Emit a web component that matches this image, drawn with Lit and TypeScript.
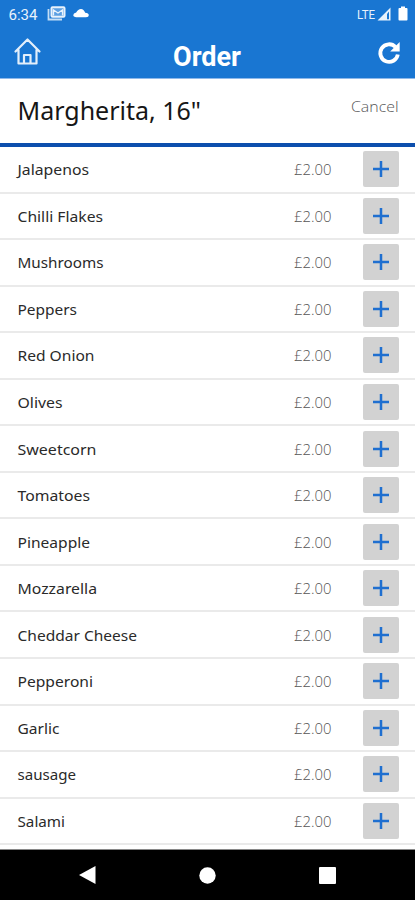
import { LitElement, html, css } from "lit";
import { customElement, property } from "lit/decorators.js";

const toppings: [string, number][] = [
  ["Jalapenos", 71.5], ["Chilli Flakes", 85.5], ["Mushrooms", 86], ["Peppers", 59.5],
  ["Red Onion", 77], ["Olives", 45], ["Sweetcorn", 79], ["Tomatoes", 72.5],
  ["Pineapple", 72.5], ["Mozzarella", 79.5], ["Cheddar Cheese", 119.5],
  ["Pepperoni", 75.5], ["Garlic", 42], ["sausage", 58.5], ["Salami", 47.5],
];

@customElement("topping-row")
class ToppingRow extends LitElement {
  @property() name = "";
  @property({ type: Number }) span = 0;

  static styles = css`
    :host {
      display: flex; align-items: center; box-sizing: border-box;
      height: 46.55px; padding: 0 16px 0 17px; border-bottom: 2px solid #eaeaea;
      font-family: "Noto Sans", sans-serif; font-size: 14.5px;
    }
    .name { flex: 1 1 0; min-width: 0; height: 24px; display: block; overflow: visible; fill: #2a2a2a; }
    .price { flex: none; width: 38px; height: 24px; margin-right: 31px; overflow: visible; fill: #555;
      font-family: "Open Sans", "Noto Sans", sans-serif; font-weight: 300; font-size: 15px; }
    .add {
      flex: none; width: 36px; height: 36px; padding: 0; border: 0; border-radius: 2px;
      background: #d2d2d2; display: grid; place-items: center;
    }
    .add svg { display: block; }
  `;

  render() {
    return html`
      <svg class="name"><text x="0.5" y="17.5" textLength=${this.span} lengthAdjust="spacingAndGlyphs">${this.name}</text></svg>
      <svg class="price"><text x="0" y="17.5" textLength="37.5" lengthAdjust="spacingAndGlyphs">£2.00</text></svg>
      <button class="add" aria-label="Add">
        <svg width="16" height="16"><path d="M8 0V16M0 8H16" stroke="#1f6fd0" stroke-width="2.5" /></svg>
      </button>`;
  }
}

@customElement("app-root")
class AppRoot extends LitElement {
  static styles = css`
    :host { display: flex; flex-direction: column; width: 415px; height: 900px;
      overflow: hidden; background: #fff; font-family: "Noto Sans", sans-serif; }
    svg { display: block; overflow: visible; flex: none; }
    .top { height: 79px; box-sizing: border-box; background: #1976d2; color: #fff;
      border-bottom: 1px solid #8fb9ea; font-family: Roboto, sans-serif; flex: none; }
    .status { height: 27px; display: flex; align-items: center; padding: 0 7px 0 8px; fill: #e8f2fc; }
    .cloud { margin: 0 0 2px 7px; fill: #fff; }
    .mail { margin-left: 9px; }
    .grow { flex: 1; }
    .battery { margin: 0 0 0 7px; fill: #fff; }
    .bar { height: 51px; display: grid; grid-template-columns: 60px 1fr 60px; align-items: center; }
    .home { margin: -8px 0 0 14px; }
    .reload { margin: -6px 14px 0 auto; }
    .title { margin: 0; text-align: center; font-size: 27px; line-height: 51px; font-weight: 700; padding-top: 6px; fill: #fff; }
    .title svg { margin: 0 auto; }
    .pizza { height: 68px; box-sizing: border-box; flex: none; border-bottom: 4px solid #0d4fad;
      display: flex; justify-content: space-between; padding: 0 16px 0 17px; }
    .size { fill: #161616; font-size: 25px; }
    .cancel { fill: #555; font-size: 15px; font-weight: 300; font-family: "Open Sans", "Noto Sans", sans-serif; }
    .list { height: 702px; flex: none; overflow: hidden; }
    .edge { height: 1px; background: #888; flex: none; }
    .nav { flex: 1; background: #000; display: flex; justify-content: space-between;
      padding: 0 79px 0 79px; align-items: center; fill: #fff; }
  `;

  render() {
    return html`
      <header class="top">
        <div class="status">
          <svg width="30" height="18"><text x="0.5" y="15" font-size="15.5" textLength="29" lengthAdjust="spacingAndGlyphs">6:34</text></svg>
          <svg class="mail" width="19" height="15" viewBox="0 0 19 15">
            <path d="M1.500 3V13.500H15" fill="none" stroke="#c4def6" stroke-width="1.800" />
            <rect x="4.500" y="1.300" width="13" height="9.400" rx="1" fill="#5b9fe2" stroke="#e8f2fc" stroke-width="2" />
            <path d="M6.500 9.500V4L11 7L15.500 4V9.500" fill="none" stroke="#e8f2fc" stroke-width="1.300" />
          </svg>
          <svg class="cloud" width="16" height="10" viewBox="0 0 16 10"><path d="M3 9.200Q.2 9 .2 7.300Q.3 5.200 3.200 4.600Q5 .9 8 .9Q10.800 1 12.200 4.800Q15.800 5.200 15.800 7.300Q15.800 9.200 13 9.200Z" /></svg>
          <span class="grow"></span>
          <svg width="19" height="16"><text x="-1" y="12.500" font-size="13" textLength="18" lengthAdjust="spacingAndGlyphs">LTE</text></svg>
          <svg width="14" height="14" viewBox="0 0 14 14"><path fill-rule="evenodd" d="M.5 13.500L13.500.5V13.500ZM10 7V12.300H12V4.500Z" /></svg>
          <svg class="battery" width="10" height="15" viewBox="0 0 10 15"><path d="M3 .5H7V2H8.700Q9.500 2 9.500 3V13.500Q9.500 14.500 8.700 14.500H1.300Q.5 14.500.5 13.500V3Q.5 2 1.300 2H3Z" /></svg>
        </div>
        <div class="bar">
          <svg class="home" width="27" height="27" viewBox="0 0 27 27" fill="none" stroke="#e3effb" stroke-width="2.200" stroke-linejoin="round" stroke-linecap="round">
            <path d="M1.500 13.500L13.500 1.500L25.500 13.500M4.500 12V25.500H22.500V12M10 25.500V17H16.500V25.500" />
          </svg>
          <h1 class="title"><svg width="69" height="51"><text x="0" y="33" textLength="68" lengthAdjust="spacingAndGlyphs">Order</text></svg></h1>
          <svg class="reload" width="24" height="24" viewBox="0 0 24 24">
            <path d="M18.500 6A8.800 8.800 0 1 0 20.800 13.500" fill="none" stroke="#fff" stroke-width="3.800" />
            <path fill="#fff" d="M22.700 1V10.500H13.200Z" />
          </svg>
        </div>
      </header>
      <section class="pizza">
        <svg class="size" width="186" height="64"><text x="0.5" y="41" textLength="183.500" lengthAdjust="spacingAndGlyphs">Margherita, 16"</text></svg>
        <svg class="cancel" width="48" height="64"><text x="0" y="33" textLength="47.500" lengthAdjust="spacingAndGlyphs">Cancel</text></svg>
      </section>
      <main class="list">
        ${toppings.map(([name, span]) => html`<topping-row .name=${name} .span=${span}></topping-row>`)}
      </main>
      <div class="edge"></div>
      <nav class="nav">
        <svg width="17" height="18"><path d="M0 9L16.500 0V18Z" /></svg>
        <svg width="17" height="17"><circle cx="8.500" cy="8.500" r="8.200" /></svg>
        <svg width="17" height="17"><rect width="17" height="17" rx="1" /></svg>
      </nav>`;
  }
}
